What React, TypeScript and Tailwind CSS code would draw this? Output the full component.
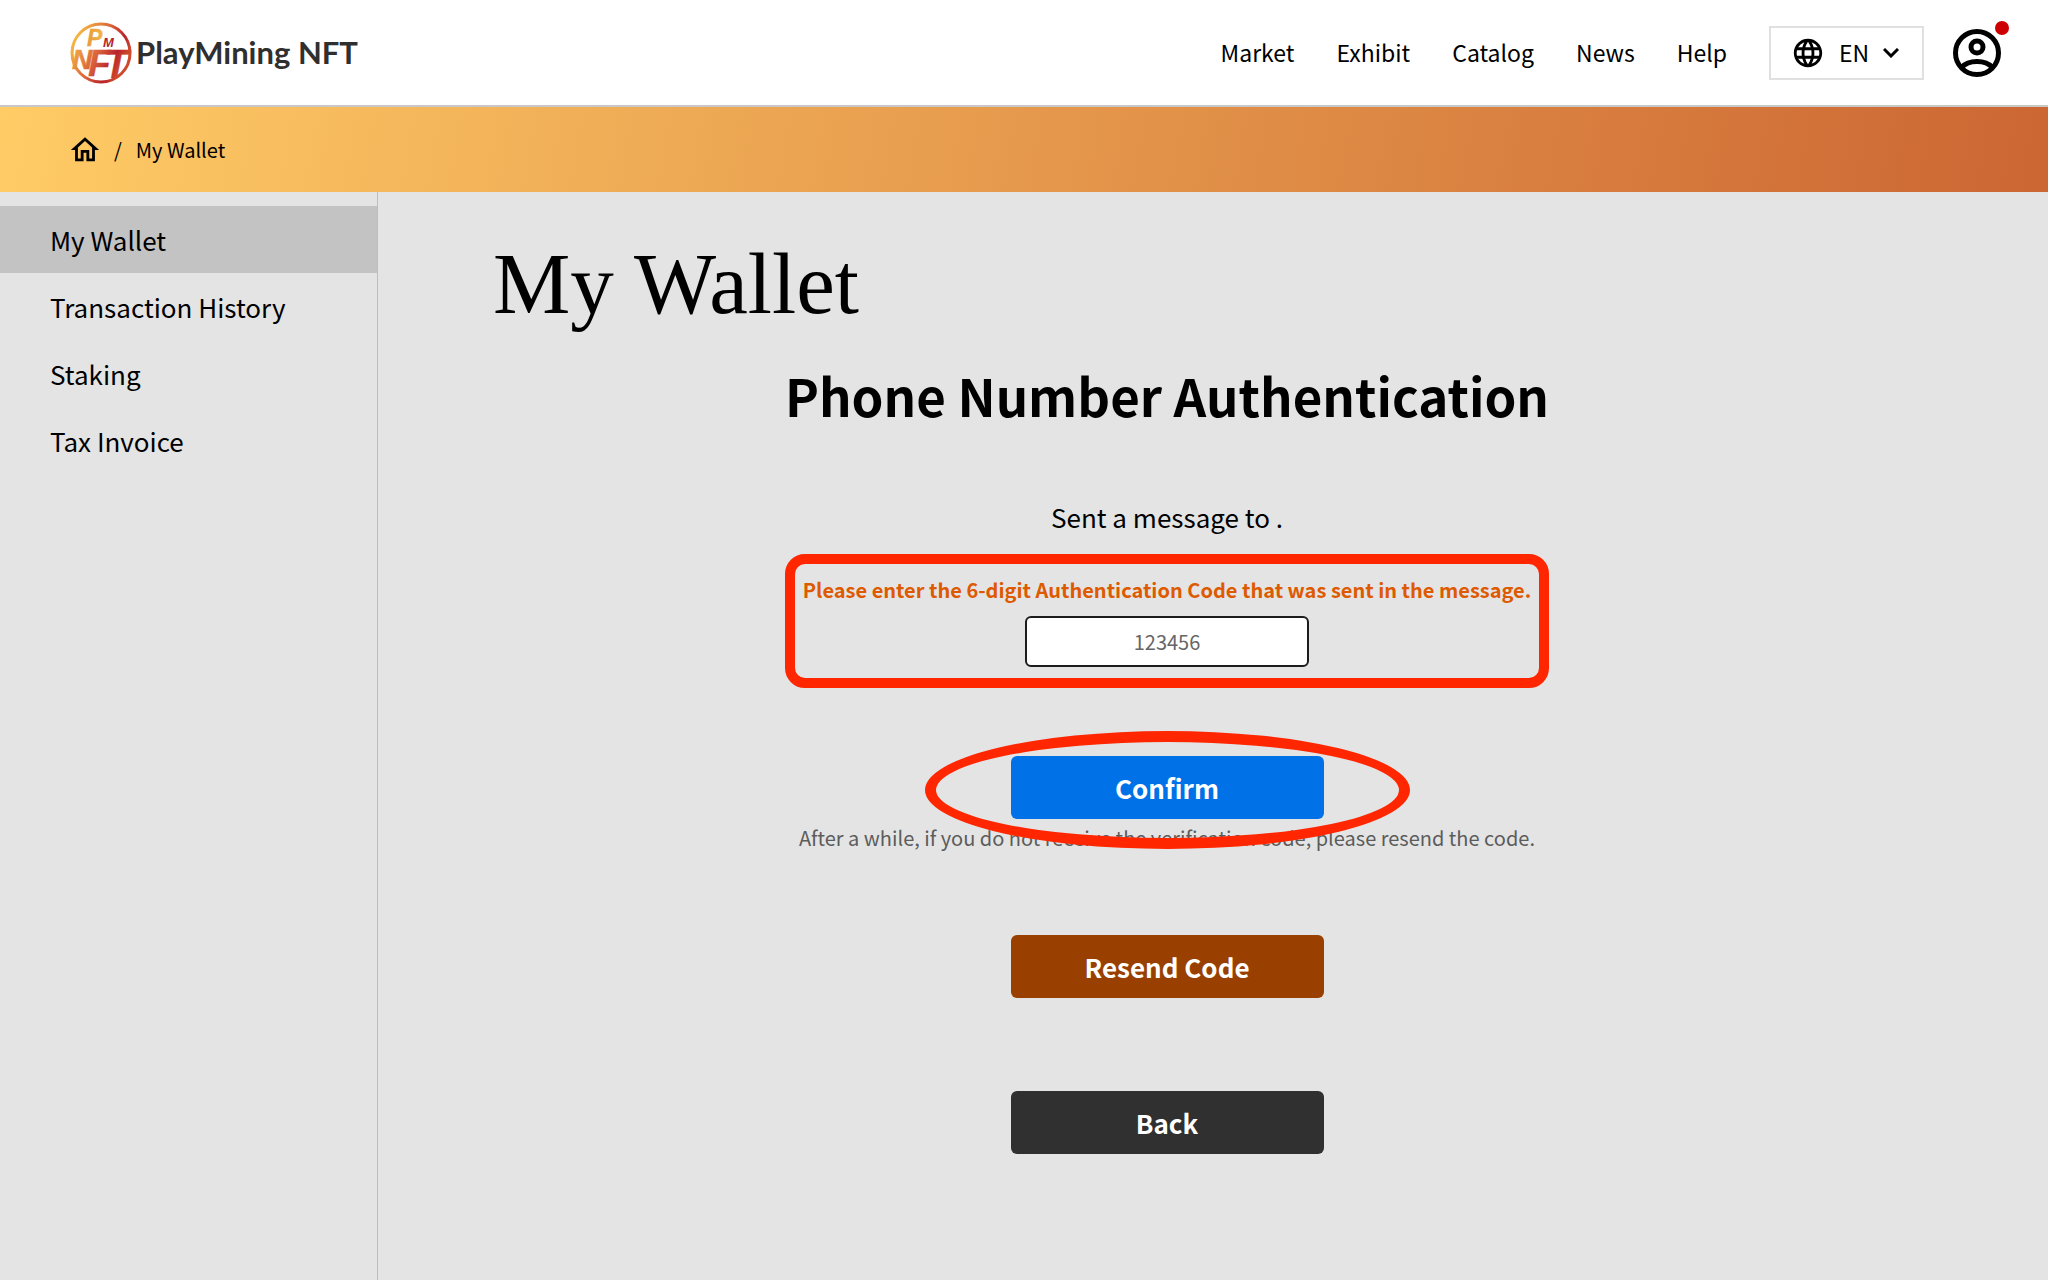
import React from 'react';
import { MdLanguage, MdOutlineHome } from 'react-icons/md';

const navLinks = ['Market', 'Exhibit', 'Catalog', 'News', 'Help'];
const sideLinks = ['My Wallet', 'Transaction History', 'Staking', 'Tax Invoice'];

function LogoMark() {
  return (
    <svg viewBox="0 0 62 62" className="size-[62px]" aria-hidden="true">
      <defs>
        <linearGradient id="mark" gradientUnits="userSpaceOnUse" x1="6" y1="16" x2="54" y2="40">
          <stop offset="0" stopColor="#f4b544" />
          <stop offset="0.5" stopColor="#d9603a" />
          <stop offset="0.8" stopColor="#b8232b" />
          <stop offset="1" stopColor="#cf4a2c" />
        </linearGradient>
        <linearGradient id="initial" x1="0" y1="0" x2="1" y2="0">
          <stop offset="0" stopColor="#e79a3c" />
          <stop offset="1" stopColor="#f4b544" />
        </linearGradient>
      </defs>
      <circle cx="31" cy="31" r="29" fill="none" stroke="url(#mark)" strokeWidth="3" />
      <g
        fill="url(#mark)"
        fontFamily="'Liberation Sans', Arial, sans-serif"
        fontStyle="italic"
      >
        <text x="17" y="24" fontSize="23" fill="url(#initial)" stroke="url(#initial)" strokeWidth="0.4">P</text>
        <text x="33" y="25" fontSize="13" fontWeight="700" fill="#b8232b">M</text>
        <text x="2" y="47" fontSize="28" stroke="url(#mark)" strokeWidth="0.6">N</text>
        <text x="18" y="54" fontSize="37" stroke="url(#mark)" strokeWidth="0.3">F</text>
        <text x="34" y="56" fontSize="40" stroke="url(#mark)" strokeWidth="0.3">T</text>
      </g>
    </svg>
  );
}

function AccountIcon() {
  return (
    <svg viewBox="0 0 48 48" className="size-12" fill="none" stroke="currentColor" strokeWidth="5" aria-hidden="true">
      <circle cx="24" cy="24" r="21.5" />
      <circle cx="24" cy="18" r="6" />
      <path d="M8.5 38.5C12 34.5 17.500 32.500 24 32.500S36 34.500 39.500 38.500" />
    </svg>
  );
}

const actionButton =
  'h-[63px] w-[313px] rounded-md text-[26px] leading-none font-bold text-white';

export default function App() {
  return (
    <div className="flex min-h-screen flex-col bg-[#e4e4e4] font-['Noto_Sans_CJK_JP',sans-serif] text-black">
      <header className="flex h-[107px] items-center justify-between border-b-2 border-[#c8c8c8] bg-white pr-[47px] pl-[70px]">
        <a href="#" className="flex items-center gap-1 font-['Lato',sans-serif] text-[31px] leading-none font-bold text-[#2f2f2f]">
          <LogoMark />
          <span>PlayMining NFT</span>
        </a>
        <div className="flex items-center">
          <nav className="flex gap-[42px] text-[23px]">
            {navLinks.map((label) => (
              <a key={label} href="#">{label}</a>
            ))}
          </nav>
          <div className="ml-[42px] flex h-[54px] w-[155px] items-center border-2 border-[#e0e0e0] pl-5">
            <MdLanguage className="size-[34px] shrink-0" />
            <div className="relative ml-3.5 flex items-center">
              <select
                aria-label="Language"
                className="w-[60px] appearance-none bg-transparent text-[23px]"
                defaultValue="EN"
              >
                <option>EN</option>
                <option>JA</option>
              </select>
              <svg viewBox="0 0 16 10" className="pointer-events-none absolute right-0 h-2.5 w-4" fill="none" stroke="currentColor" strokeWidth="3" aria-hidden="true">
                <path d="M1 1l7 7 7-7" />
              </svg>
            </div>
          </div>
          <button type="button" aria-label="Account" className="relative ml-[29px]">
            <AccountIcon />
            <span className="absolute -top-2 -right-2 size-3.5 rounded-full bg-[#cc0000]" />
          </button>
        </div>
      </header>

      <nav aria-label="Breadcrumb" className="flex h-[85px] items-center gap-3 bg-linear-[100deg] from-[#ffcc66] to-[#cc6633] pl-[68px] text-xl">
        <a href="#" aria-label="Home"><MdOutlineHome className="size-[34px]" /></a>
        <span>/</span>
        <span className="ml-0.5">My Wallet</span>
      </nav>

      <div className="flex grow">
        <aside className="w-[378px] shrink-0 border-r border-[#bdbdbd] pt-3.5">
          <ul>
            {sideLinks.map((label, i) => (
              <li key={label}>
                <a
                  href="#"
                  className={`flex h-[67px] items-center pl-[50px] text-[26px] ${i === 0 ? 'bg-[#c3c3c3]' : ''}`}
                >
                  {label}
                </a>
              </li>
            ))}
          </ul>
        </aside>

        <main className="grow pt-[42px] pr-[207px] pl-[115px]">
          <h1 className="font-['Liberation_Serif',serif] text-[87px] leading-[100px]">My Wallet</h1>
          <form className="flex flex-col items-center text-center" onSubmit={(e) => e.preventDefault()}>
            <h2 className="mt-[21px] text-[51px] leading-[80px] font-bold">Phone Number Authentication</h2>
            <p className="mt-[62px] text-[26px] leading-10">Sent a message to .</p>
            <div className="mt-[17px] flex h-[134px] w-[764px] flex-col items-center rounded-[20px] border-[10px] border-[#ff2600] pt-2.5">
              <label htmlFor="code" className="text-xl leading-8 font-bold whitespace-nowrap text-[#de5a00]">
                Please enter the 6-digit Authentication Code that was sent in the message.
              </label>
              <input
                id="code"
                type="text"
                inputMode="numeric"
                placeholder="123456"
                className="mt-2.5 h-[51px] w-[284px] shrink-0 rounded-md border-2 border-[#1c1c1c] bg-white text-center text-xl placeholder:text-[#666666]"
              />
            </div>
            <div className="relative mt-[68px] flex">
              <button type="submit" className={`${actionButton} bg-[#0071e6]`}>Confirm</button>
              <span className="pointer-events-none absolute -inset-x-[86px] -top-[25px] -bottom-[30px] z-10 rounded-[50%] border-[11px] border-[#ff2600]" />
            </div>
            <p className="mt-1 text-xl leading-[30px] text-[#5c5c5c]">
              After a while, if you do not receive the verification code, please resend the code.
            </p>
            <button type="button" className={`${actionButton} mt-[82px] bg-[#994000]`}>Resend Code</button>
            <button type="button" className={`${actionButton} mt-[93px] bg-[#303030]`}>Back</button>
          </form>
        </main>
      </div>
    </div>
  );
}
